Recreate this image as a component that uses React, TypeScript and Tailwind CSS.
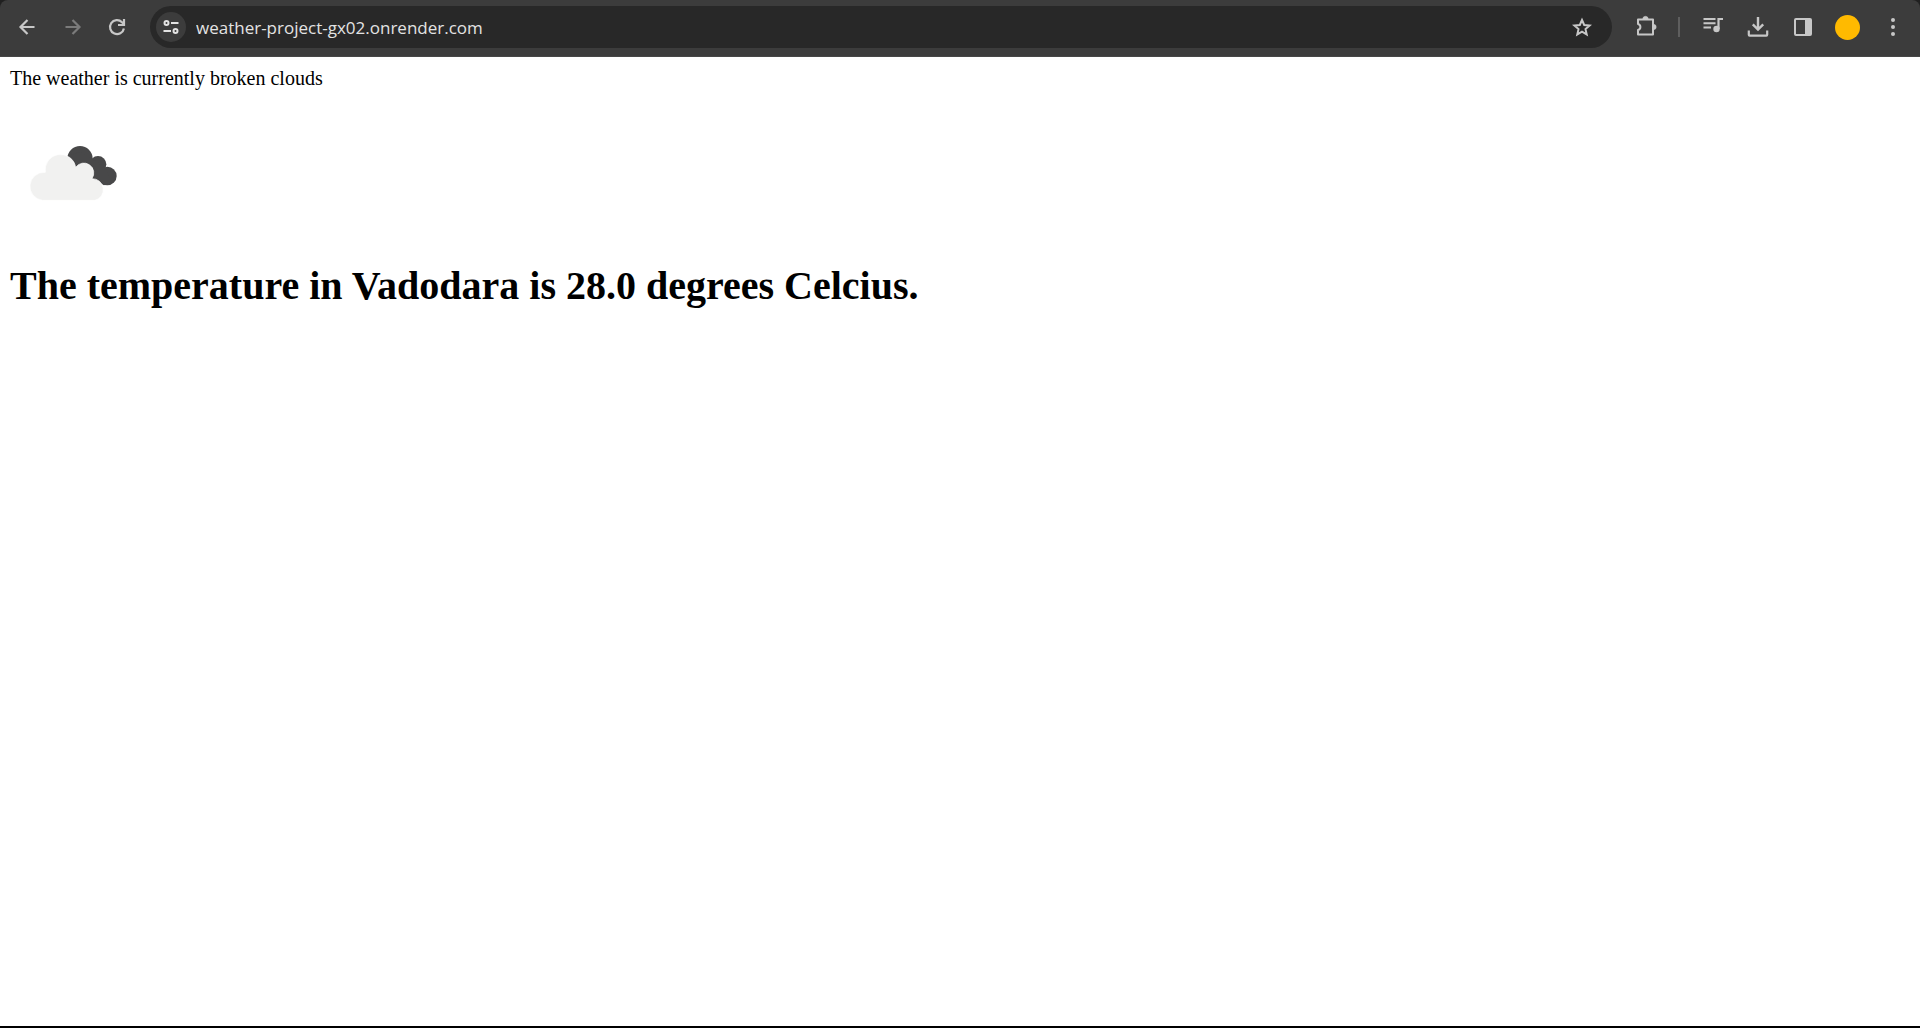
import type { ReactNode } from "react";

function ToolButton({ label, dim, children }: { label: string; dim?: boolean; children: ReactNode }) {
  return (
    <button
      type="button"
      aria-label={label}
      disabled={dim}
      className={`flex h-11 w-[45px] shrink-0 items-center justify-center ${dim ? "text-[#7b7b7b]" : "text-[#c7c7c7]"}`}
    >
      {children}
    </button>
  );
}

function Icon({ children }: { children: ReactNode }) {
  return (
    <svg viewBox="0 0 24 24" className="size-6" fill="none" stroke="currentColor" strokeWidth="2" aria-hidden="true">
      {children}
    </svg>
  );
}

function Toolbar() {
  return (
    <header className="bg-[#202020]">
      <div className="flex h-[57px] items-center rounded-t-lg border-b border-[#474747] bg-[#3c3c3c] pr-[5px] pb-0.5 pl-1">
        <nav aria-label="History" className="flex">
          <ToolButton label="Back">
            <Icon>
              <path d="M19.5 12H6M12.5 5l-7 7 7 7" strokeWidth="2.2" />
            </Icon>
          </ToolButton>
          <ToolButton label="Forward" dim>
            <Icon>
              <path d="M5.5 12H19M12.5 5l7 7-7 7" strokeWidth="2.2" />
            </Icon>
          </ToolButton>
          <ToolButton label="Reload">
            <Icon>
              <path d="M18.9 13.5A7 7 0 1 1 17 7.2l1.5 1.6" strokeWidth="2.2" />
              <path d="M19 4v6h-6" strokeWidth="2.2" />
            </Icon>
          </ToolButton>
        </nav>
        <div className="ml-[11px] flex h-[42px] flex-1 items-center rounded-full bg-[#282828] pr-2 pl-1.5">
          <button
            type="button"
            aria-label="View site information"
            className="flex size-[30px] shrink-0 items-center justify-center rounded-full bg-[#3c3c3c] text-[#e3e3e3]"
          >
            <svg viewBox="0 0 16 16" className="size-4" fill="none" stroke="currentColor" strokeWidth="2" aria-hidden="true">
              <circle cx="3.5" cy="4" r="2" />
              <path d="M8 4h7.5M.5 12H8" />
              <circle cx="12.5" cy="12" r="2" />
            </svg>
          </button>
          <input
            type="text"
            aria-label="Address"
            spellCheck={false}
            defaultValue="weather-project-gx02.onrender.com"
            className="ml-2.5 min-w-0 flex-1 bg-transparent pt-0.5 font-['Open_Sans','Noto_Sans',sans-serif] text-[17px] leading-6 text-[#e3e3e3] outline-none"
          />
          <ToolButton label="Bookmark this tab">
            <Icon>
              <path d="m12 5 2.2 5 5.4.5-4.1 3.6 1.2 5.3L12 16.6l-4.7 2.8 1.2-5.3-4.1-3.6 5.4-.5z" />
            </Icon>
          </ToolButton>
        </div>
        <div className="ml-[11px] flex items-center">
          <ToolButton label="Extensions">
            <Icon>
              <path d="M4 4.5h15v15H4V15c1.5-.4 2.4-1.500 2.400-3S5.500 9.400 4 9z" strokeLinejoin="round" />
              <path
                d="M8.8 4a2.700 2.700 0 0 1 5.400 0zM19.500 9.300a2.700 2.700 0 0 1 0 5.400z"
                fill="currentColor"
                strokeWidth="0.5"
              />
            </Icon>
          </ToolButton>
          <span className="mx-2.5 h-5 w-0.5 bg-[#5e5e5e]" />
          <ToolButton label="Media controls">
            <Icon>
              <path d="M2.5 4h12M2.5 8.300h12M2.500 12.600h7.500" />
              <path d="M17.5 14V4H22" strokeWidth="2.2" />
              <circle cx="15.5" cy="14" r="3.2" fill="currentColor" stroke="none" />
            </Icon>
          </ToolButton>
          <ToolButton label="Downloads">
            <Icon>
              <path d="M12 2v12M6.800 9.300 12 14.500l5.200-5.200" strokeWidth="2.4" />
              <path d="M2.800 15.500v4.300q0 .8.8.8h16.800q.8 0 .8-.8v-4.300" strokeWidth="2.2" />
            </Icon>
          </ToolButton>
          <ToolButton label="Side panel">
            <Icon>
              <rect x="4" y="4" width="16" height="16" rx="1" />
              <path d="M14 4h6v16h-6z" fill="currentColor" stroke="none" />
            </Icon>
          </ToolButton>
          <ToolButton label="Profile">
            <span className="size-[25px] rounded-full bg-[#ffba00]" />
          </ToolButton>
          <ToolButton label="Menu">
            <Icon>
              <g fill="currentColor" stroke="none">
                <circle cx="12" cy="5" r="2" />
                <circle cx="12" cy="12" r="2" />
                <circle cx="12" cy="19" r="2" />
              </g>
            </Icon>
          </ToolButton>
        </div>
      </div>
    </header>
  );
}

function BrokenClouds() {
  return (
    <svg viewBox="30 0 375 375" className="size-[125px]" role="img" aria-label="Broken clouds">
      <g fill="#484849">
        <circle cx="240" cy="146" r="38" />
        <circle cx="294" cy="163" r="25" />
        <circle cx="322" cy="198" r="28" />
        <path d="M205 137 240 125 277 148 315 172 335 215 312 226 278 208 232 174z" />
      </g>
      <path
        d="M128 271a42 42 0 0 1 8-84 46 46 0 0 1 91-15 29 29 0 0 1 49 34 33 33 0 0 1 9 65z"
        fill="#f1f1f0"
        stroke="#fff"
        strokeWidth="2"
      />
    </svg>
  );
}

export default function App() {
  return (
    <div className="flex min-h-screen flex-col border-b-2 border-black bg-white">
      <Toolbar />
      <main className="flex-1 p-2.5 font-['Liberation_Serif',serif] text-black">
        <p className="text-xl leading-[23px]">The weather is currently broken clouds</p>
        <div className="my-5">
          <BrokenClouds />
        </div>
        <h1 className="mt-7 text-[40px] leading-[46px] font-bold">
          The temperature in Vadodara is 28.0 degrees Celcius.
        </h1>
      </main>
    </div>
  );
}
